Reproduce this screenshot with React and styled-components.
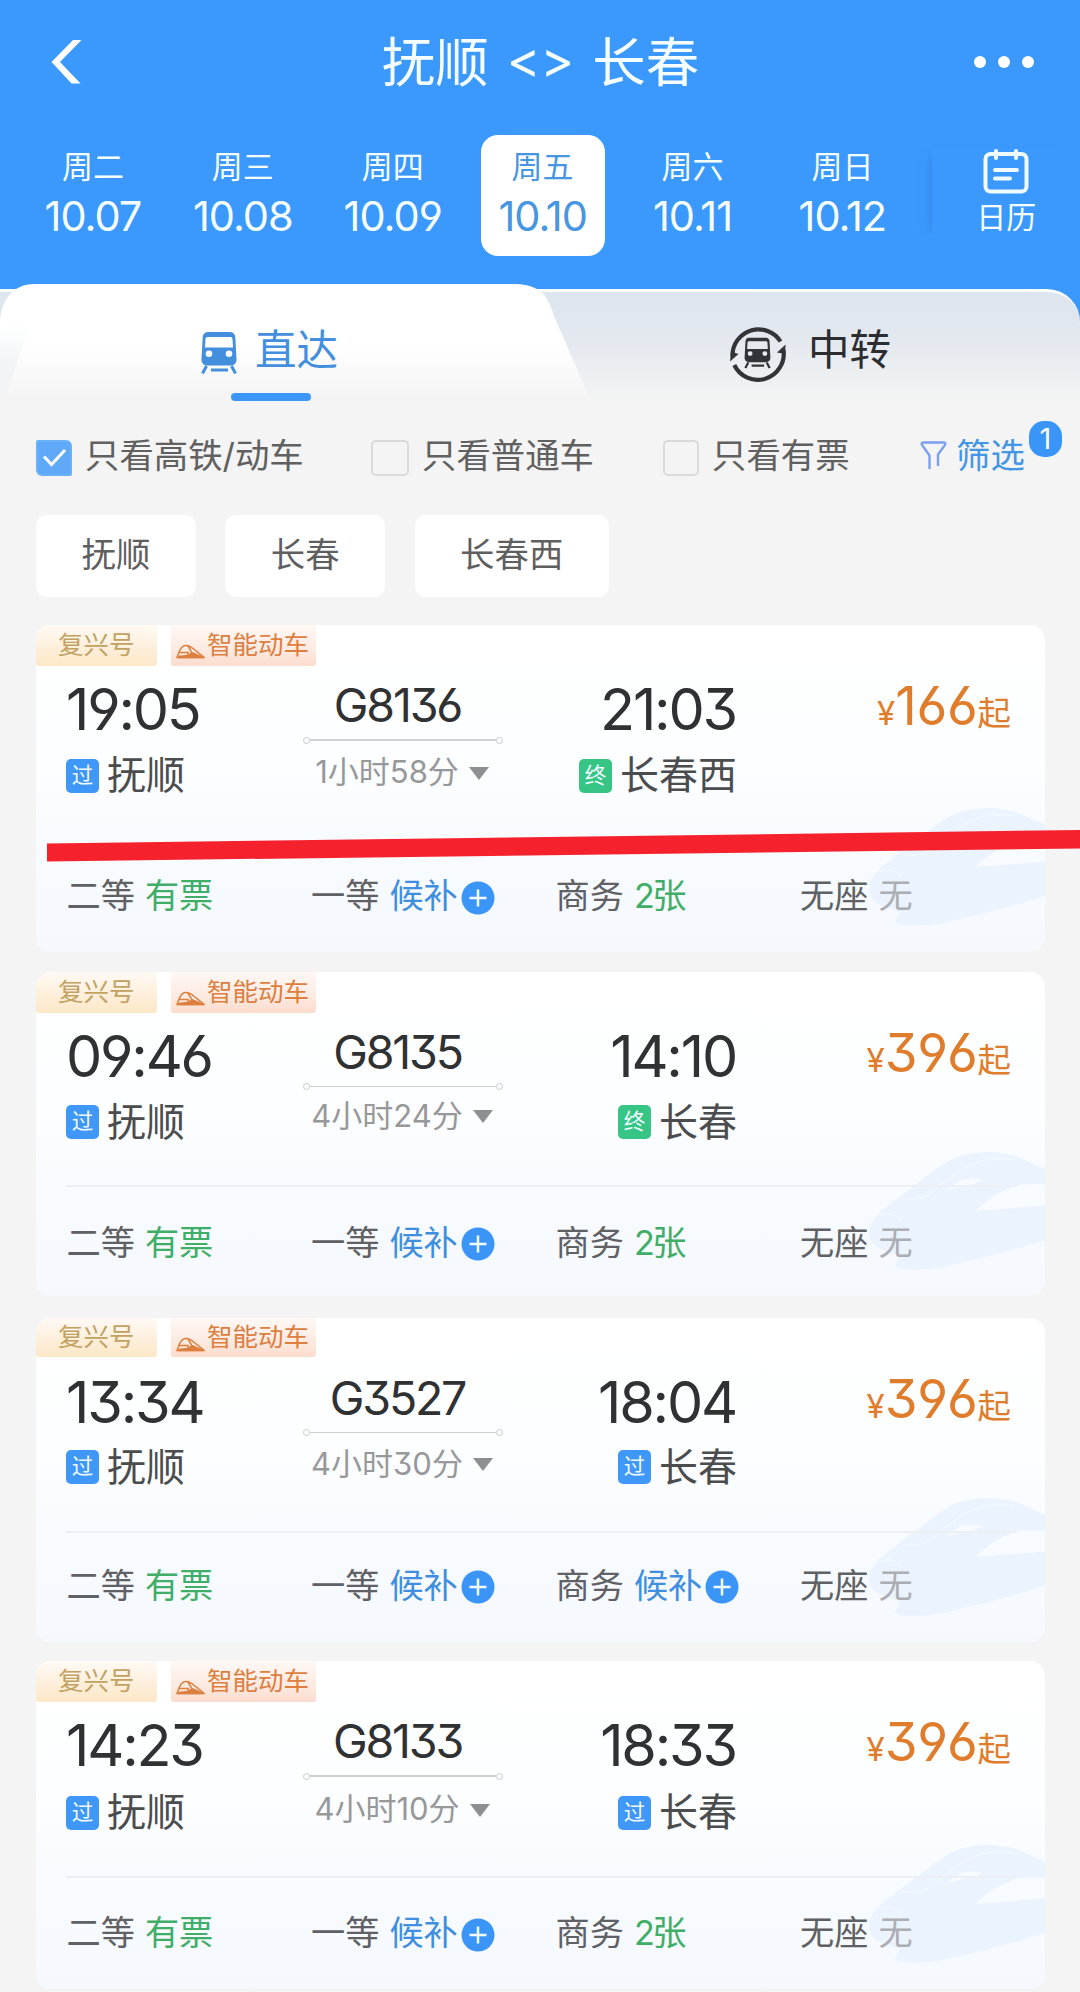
import React from 'react';
import styled, { createGlobalStyle } from 'styled-components';

const GlobalStyle = createGlobalStyle`
  * {
    box-sizing: border-box;
  }

  body {
    margin: 0;
    background: #f4f4f4;
    font-family: Inter, 'Noto Sans CJK SC', sans-serif;
    font-feature-settings: 'cv03', 'cv04', 'cv09';
  }
`;

const Page = styled.div`
  position: relative;
  width: 1080px;
  height: 1992px;
  overflow: hidden;
  background: #f4f4f4;
`;

const Header = styled.header`
  height: 284px;
  background: #3b98fc;
  color: #f6ffff;
`;

const TitleBar = styled.div`
  display: flex;
  align-items: center;
  justify-content: space-between;
  height: 135px;
  padding: 0 46px 12px 51px;
`;

const Title = styled.h1`
  display: flex;
  align-items: center;
  gap: 18px;
  margin: 2px 0 0 25px;
  font-size: 53.5px;
  font-weight: 400;
  line-height: 60px;
`;

const Swap = styled.span`
  margin-top: -5px;
  font-size: 51px;
  font-weight: 400;
`;

const Dots = styled.div`
  display: flex;
  gap: 12px;

  i {
    width: 12px;
    height: 12px;
    border-radius: 50%;
    background: #fff;
  }
`;

const DateBar = styled.div`
  display: flex;
  padding-left: 18px;
`;

const DateSlot = styled.div`
  display: flex;
  justify-content: center;
  width: 149.9px;
`;

const DateCell = styled.div`
  width: 124px;
  height: 121px;
  padding-top: 14px;
  border-radius: 17px;
  text-align: center;
  background: ${(props) => (props.$active ? '#fff' : 'transparent')};
  color: ${(props) => (props.$active ? '#4796e2' : 'inherit')};
`;

const Weekday = styled.div`
  font-size: 31px;
  line-height: 36px;
`;

const DayNumber = styled.div`
  margin-top: 6px;
  font-size: 41.5px;
  line-height: 50px;
  letter-spacing: -1px;
  white-space: nowrap;
`;

const CalendarButton = styled.div`
  display: flex;
  flex: 1;
  flex-direction: column;
  align-items: center;
  margin: 14px 0 18px 15px;
  font-size: 30px;
  line-height: 36px;
  box-shadow: -10px 0 8px -8px #3589e8;

  svg {
    margin-bottom: 5px;
  }
`;

const Tabs = styled.div`
  position: relative;
  display: flex;
  height: 120px;
  background: #3b98fc;

  &::before {
    content: '';
    position: absolute;
    inset: 5px 0 0 0;
    border-top: 3px solid #fbfdff;
    border-radius: 0 33px 0 0;
    background: linear-gradient(#dde5ee, #e3e8ef 40%, #f4f4f4);
  }

  &::after {
    content: '';
    position: absolute;
    inset: 0;
    background: linear-gradient(#fff, #fff 50%, #f4f4f4 96%);
    clip-path: path('M0 120V38C1 15 14 0 34 0H515C530 0 540 5 545 12Q550 20 554 32L592 120Z');
  }
`;

const CornerFill = styled.div`
  position: absolute;
  left: 0;
  top: 40px;
  width: 30px;
  height: 80px;
  z-index: 1;
  background: linear-gradient(rgba(240, 243, 246, 0), #f1f4f6 55%, #f4f4f4);
  clip-path: polygon(0 0, 100% 0, 10% 100%, 0 100%);
`;

const Tab = styled.div`
  position: relative;
  z-index: 1;
  display: flex;
  align-items: center;
  height: 126px;
  gap: ${(props) => props.$gap}px;
  width: ${(props) => props.$width}px;
  padding-left: ${(props) => props.$indent}px;
  font-size: 41.5px;
  color: ${(props) => (props.$active ? '#438fdd' : '#2c2d30')};

  &::after {
    content: '';
    display: ${(props) => (props.$active ? 'block' : 'none')};
    position: absolute;
    left: 231px;
    top: 109px;
    width: 80px;
    height: 8px;
    border-radius: 4px;
    background: #3b96f8;
  }

  svg {
    position: relative;
    top: 6px;
  }
`;

const Filters = styled.div`
  display: flex;
  align-items: center;
  height: 111px;
  padding: 0 18px 14px 36px;
  color: #606060;
  font-size: 34.4px;
  white-space: nowrap;
`;

const Option = styled.label`
  display: flex;
  align-items: center;
  width: ${(props) => props.$width}px;
  gap: 13px;
`;

const Box = styled.span`
  display: grid;
  place-items: center;
  flex: none;
  width: ${(props) => props.$size || 36}px;
  height: 36px;
  margin-top: 10px;
  border: 2.5px solid ${(props) => (props.$checked ? '#6bb0fb' : '#dadada')};
  border-radius: ${(props) => (props.$checked ? '2px 6px 2px 6px' : '5px')};
  background: ${(props) => (props.$checked ? '#5fa9f8' : 'transparent')};
`;

const FilterButton = styled.div`
  position: relative;
  display: flex;
  align-items: center;
  gap: 9px;
  color: #4395e6;

  > svg {
    margin-top: 4px;
  }
`;

const Count = styled.span`
  position: absolute;
  left: 109px;
  top: -7px;
  width: 33px;
  height: 36px;
  border-radius: 15px;
  background: #3a95f8;
  color: #fff;
  font-size: 29px;
  line-height: 35px;
  text-align: center;
`;

const Stations = styled.div`
  display: flex;
  gap: 29.5px;
  padding-left: 36px;
`;

const StationChip = styled.div`
  height: 82px;
  padding: 0 45.5px;
  border-radius: 11px;
  background: #fff;
  color: #5f5f5f;
  font-size: 34.4px;
  line-height: 80px;
`;

const TrainList = styled.div`
  display: flex;
  flex-direction: column;
  padding: 28px 35px 0 36px;
`;

const Card = styled.article`
  position: relative;
  height: ${(props) => props.$height}px;
  margin-bottom: ${(props) => props.$gap}px;
  border-radius: 15px;
  overflow: hidden;
  background: linear-gradient(#fff, #fdfeff 40%, #f8fbff 65%, #f5f9fe);
`;

const Watermark = styled.svg`
  position: absolute;
  right: 0;
  bottom: 26px;
`;

const Tags = styled.div`
  display: flex;
  gap: 14px;
  height: ${(props) => props.$height}px;
  margin-bottom: ${(props) => 41 - props.$height}px;
  line-height: ${(props) => props.$height - 1}px;
  font-size: 25.5px;
`;

const SeriesTag = styled.span`
  width: 121px;
  padding-left: 22px;
  border-radius: 0 0 3px 3px;
  color: #c2a161;
  background: linear-gradient(#fffaf5, #fdeed9 60%, #fde8c8);
`;

const SmartTag = styled.span`
  display: flex;
  gap: 2px;
  width: 145px;
  padding-left: 5px;
  border-radius: 0 0 3px 3px;
  color: #dc7f3f;
  background: linear-gradient(#fff8f5, #fdeae1 60%, #fbdccd);

  svg {
    flex: none;
    margin-top: 19px;
  }
`;

const Trip = styled.div`
  position: relative;
  display: grid;
  grid-template-columns: 237px 200px 233px 274px;
  height: ${(props) => props.$height}px;
  margin: 0 28px 0 30px;
  border-bottom: 2px solid #edeff2;
`;

const Stop = styled.div`
  display: flex;
  flex-direction: column;
  align-items: ${(props) => (props.$end ? 'flex-end' : 'flex-start')};
  padding-top: 15px;
`;

const Time = styled.div`
  color: #303133;
  font-size: 57.5px;
  line-height: 56px;
  letter-spacing: -2.2px;
`;

const StopName = styled.div`
  display: flex;
  align-items: center;
  gap: 8px;
  margin-top: ${(props) => props.$top}px;
  margin-right: -1px;
  color: #4b4c4e;
  font-size: 39px;
  line-height: 52px;
`;

const StopBadge = styled.span`
  width: 33px;
  height: 34px;
  margin-top: 1px;
  border-radius: 5px;
  background: ${(props) => (props.$last ? '#36c584' : '#3f97f7')};
  color: #f0fbff;
  font-size: 21.5px;
  line-height: 33px;
  text-align: center;
`;

const Route = styled.div`
  padding-top: 16px;
  text-align: center;
`;

const TrainNumber = styled.div`
  padding-right: 11px;
  color: #303133;
  font-size: 46.5px;
  line-height: 46px;
  letter-spacing: -2.2px;
`;

const RouteLine = styled.div`
  display: flex;
  align-items: center;
  height: 6px;
  margin-top: 9px;

  &::before,
  &::after {
    content: '';
    width: 5px;
    height: 5px;
    border: 1px solid #c9cbcd;
    border-radius: 50%;
  }

  span {
    flex: 1;
    height: 1.5px;
    background: #cfd1d3;
  }
`;

const Duration = styled.div`
  display: flex;
  align-items: center;
  justify-content: center;
  gap: 10px;
  margin-top: ${(props) => props.$top}px;
  padding-right: 2px;
  color: #97989a;
  font-size: 31px;
  line-height: 40px;
  white-space: nowrap;

  &::after {
    content: '';
    margin-top: 2px;
    border: 10px solid transparent;
    border-top: 13px solid #8e8f92;
    border-bottom: 0;
  }
`;

const Price = styled.div`
  display: flex;
  align-items: baseline;
  justify-content: flex-end;
  height: 60px;
  padding-top: 10px;
  margin-right: -1px;
  color: #df7d2c;
  font-size: 53px;
  line-height: 60px;
  letter-spacing: -0.3px;
`;

const Unit = styled.span`
  font-size: ${(props) => props.$size}px;
  letter-spacing: 0;
`;

const Seats = styled.div`
  position: relative;
  display: grid;
  grid-template-columns: repeat(4, 244.5px);
  padding: ${(props) => props.$top}px 0 0 30.5px;
  color: #5f6164;
  font-size: 34.2px;
  line-height: 50px;
`;

const Seat = styled.div`
  display: flex;
  align-items: center;
  white-space: nowrap;
`;

const seatColors = {
  ok: '#40ae67',
  wait: '#3f8fde',
  none: '#acaeb3',
};

const SeatStatus = styled.span`
  margin-left: 10px;
  color: ${(props) => seatColors[props.$kind]};
  letter-spacing: ${(props) => (props.$tight ? '-2.5px' : 'normal')};
`;

const PlusIcon = styled.svg`
  margin: 3px 0 0 3px;
`;

const Mark = styled.svg`
  position: absolute;
  left: 47px;
  top: 830px;
`;

const dates = [
  ['周二', '10.07'],
  ['周三', '10.08'],
  ['周四', '10.09'],
  ['周五', '10.10'],
  ['周六', '10.11'],
  ['周日', '10.12'],
];

const waitSeat = { text: '候补', kind: 'wait' };
const twoLeft = { text: '2张', kind: 'ok', tight: true };

const trains = [
  {
    no: 'G8136', from: '19:05', to: '21:03', dest: '长春西', last: true,
    duration: '1小时58分', price: 166, business: twoLeft,
    size: { height: 327, gap: 19.5, tags: 41, trip: 180, name: 12, duration: 9, seats: 25 },
  },
  {
    no: 'G8135', from: '09:46', to: '14:10', dest: '长春', last: true,
    duration: '4小时24分', price: 396, business: twoLeft,
    size: { height: 324.5, gap: 21.5, tags: 41, trip: 174.5, name: 12, duration: 6, seats: 30.5 },
  },
  {
    no: 'G3527', from: '13:34', to: '18:04', dest: '长春', last: false,
    duration: '4小时30分', price: 396, business: waitSeat,
    size: { height: 324.5, gap: 19, tags: 39, trip: 174, name: 11, duration: 8, seats: 28 },
  },
  {
    no: 'G8133', from: '14:23', to: '18:33', dest: '长春', last: false,
    duration: '4小时10分', price: 396, business: twoLeft,
    size: { height: 328, gap: 0, tags: 41, trip: 176, name: 13, duration: 10, seats: 30 },
  },
];

function TrainIcon({ width, height }) {
  return (
    <svg width={width} height={height} viewBox="0 0 36 42">
      <path
        fill="currentColor"
        fillRule="evenodd"
        d="M7 0H29C32 0 34 2 34.3 5L35.5 27C35.8 31 33 33.5 30 33.5H6C3 33.5 .2 31 .5 27L1.7 5C2 2 4 0 7 0ZM6.5 5Q4.6 5 4.5 7L4 15.5H32L31.5 7Q31.4 5 29.5 5ZM8 18.5A3.3 3.3 0 1 0 8 25.1A3.3 3.3 0 1 0 8 18.5ZM28 18.5A3.3 3.3 0 1 0 28 25.1A3.3 3.3 0 1 0 28 18.5Z"
      />
      <path stroke="currentColor" strokeWidth="3" d="M5.5 34L1.5 41.5M30.5 34L34.5 41.5M10 38H27" />
    </svg>
  );
}

function TransferIcon() {
  return (
    <svg width="56" height="57" viewBox="0 0 56 57">
      <g fill="none" stroke="#333437" strokeWidth="4.2">
        <path d="M2.5 31A26 26 0 0 1 50.5 16.5" />
        <path d="M4.3 40A26 26 0 0 0 53.5 25" />
      </g>
      <path fill="#333437" d="M0 36.5L8.5 29L1 26.5ZM55.6 19.5L47 27.5L55 29Z" />
      <g color="#333437" transform="translate(14 12.5)">
        <TrainIcon width="27" height="31" />
      </g>
    </svg>
  );
}

function CalendarIcon() {
  return (
    <svg width="46" height="45" viewBox="0 0 46 45" fill="none" stroke="#f0fbff" strokeWidth="4" strokeLinecap="round">
      <rect x="2.500" y="5" width="41" height="37.500" rx="5" />
      <path d="M13 2V9M33 2V9M12 21H34M12 29.5H27" />
    </svg>
  );
}

function SeatItem({ name, status }) {
  return (
    <Seat>
      {name}
      <SeatStatus $kind={status.kind} $tight={status.tight}>{status.text}</SeatStatus>
      {status.kind === 'wait' && (
        <PlusIcon width="34" height="34" viewBox="0 0 34 34">
          <circle cx="17" cy="17" r="16.5" fill="#3a95f7" />
          <path d="M8.5 17H25.5M17 8.5V25.5" stroke="#f4fbff" strokeWidth="2.5" />
        </PlusIcon>
      )}
    </Seat>
  );
}

function TrainCard({ train }) {
  const { size } = train;
  return (
    <Card $height={size.height} $gap={size.gap}>
      <Watermark width="176" height="118" viewBox="0 0 176 118">
        <path
          fill="#eaf3fe"
          d="M1 74Q5 65 15 57L36 41L67 17.5Q80 7 91 4Q106 0 122 0Q140 1 153 6.5L176 17V32.5Q155 31 146 34Q130 40 122 46Q112 53 106.6 59L176 53.5V87.5Q130 103 84 112.5Q64 118 50 117.5Q30 119 26 114L31 104Q20 100 12 97Q-3 91 1 74Z"
        />
        <path fill="none" stroke="#f3f8ff" strokeWidth="1.5" d="M32 46Q48 50 61 42Q72 32 84 24Q98 12 118 8Q132 5 145 8M9 64Q26 58 32 70" />
        <path fill="#f7fbff" d="M76 39L91 28Q104 25 114 28Q106 33 94 34Z" />
      </Watermark>
      <Tags $height={size.tags}>
        <SeriesTag>复兴号</SeriesTag>
        <SmartTag>
          <svg width="29" height="15" viewBox="0 0 29 15" fill="none" stroke="currentColor" strokeWidth="1.5">
            <path d="M1 13.5L3.5 7Q6 1.5 10 1.5Q14 1.5 19 6L28 13.5Z" />
            <path d="M2.500 8.5H12V13M12 2L15.500 8" />
            <path fill="currentColor" d="M3 12.500V13.5H27L16 8.500L12 11.500Z" />
          </svg>
          智能动车
        </SmartTag>
      </Tags>
      <Trip $height={size.trip}>
        <Stop>
          <Time>{train.from}</Time>
          <StopName $top={size.name}>
            <StopBadge>过</StopBadge>抚顺
          </StopName>
        </Stop>
        <Route>
          <TrainNumber>{train.no}</TrainNumber>
          <RouteLine><span /></RouteLine>
          <Duration $top={size.duration}>{train.duration}</Duration>
        </Route>
        <Stop $end>
          <Time>{train.to}</Time>
          <StopName $top={size.name}>
            <StopBadge $last={train.last}>{train.last ? '终' : '过'}</StopBadge>
            {train.dest}
          </StopName>
        </Stop>
        <Price>
          <Unit $size={33}>¥</Unit>
          {train.price}
          <Unit $size={33.5}>起</Unit>
        </Price>
      </Trip>
      <Seats $top={size.seats}>
        <SeatItem name="二等" status={{ text: '有票', kind: 'ok' }} />
        <SeatItem name="一等" status={waitSeat} />
        <SeatItem name="商务" status={train.business} />
        <SeatItem name="无座" status={{ text: '无', kind: 'none' }} />
      </Seats>
    </Card>
  );
}

export default function App() {
  return (
    <Page>
      <GlobalStyle />
      <Header>
        <TitleBar>
          <svg width="31" height="44" viewBox="0 0 31 44">
            <path fill="#fff" d="M22 0H30.5L9 22L29.5 43.5H20.5L.5 22Z" />
          </svg>
          <Title>
            <span>抚顺</span>
            <Swap>&lt;&gt;</Swap>
            <span>长春</span>
          </Title>
          <Dots><i /><i /><i /></Dots>
        </TitleBar>
        <DateBar>
          {dates.map(([weekday, day]) => (
            <DateSlot key={day}>
              <DateCell $active={day === '10.10'}>
                <Weekday>{weekday}</Weekday>
                <DayNumber>{day}</DayNumber>
              </DateCell>
            </DateSlot>
          ))}
          <CalendarButton>
            <CalendarIcon />
            日历
          </CalendarButton>
        </DateBar>
      </Header>
      <Tabs>
        <CornerFill />
        <Tab $active $width={545} $indent={201} $gap={18}>
          <TrainIcon width={36} height={42} />
          直达
        </Tab>
        <Tab $width={535} $indent={185} $gap={22}>
          <TransferIcon />
          中转
        </Tab>
      </Tabs>
      <Filters>
        <Option $width={335}>
          <Box $checked>
            <svg width="25" height="20" viewBox="0 0 25 20" fill="none" stroke="#fff" strokeWidth="3">
              <path d="M2 8.5L9.5 16.5L23 2" />
            </svg>
          </Box>
          只看高铁/动车
        </Option>
        <Option $width={292}>
          <Box $size={38} />
          只看普通车
        </Option>
        <Option $width={257}>
          <Box />
          只看有票
        </Option>
        <FilterButton>
          <svg width="27" height="30" viewBox="0 0 27 30" fill="none" stroke="#7c9fee" strokeWidth="2.4">
            <path d="M9.5 29V15.5L2 5Q.8 2.5 3.5 2.5H23.5Q26.2 2.5 25 5L18 14.5V26" />
          </svg>
          筛选
          <Count>1</Count>
        </FilterButton>
      </Filters>
      <Stations>
        <StationChip>抚顺</StationChip>
        <StationChip>长春</StationChip>
        <StationChip>长春西</StationChip>
      </Stations>
      <TrainList>
        {trains.map((train) => (
          <TrainCard key={train.no} train={train} />
        ))}
      </TrainList>
      <Mark width="1033" height="32">
        <polygon points="0,13.5 1033,0 1033,18.5 0,31.5" fill="#f5222d" />
      </Mark>
    </Page>
  );
}
